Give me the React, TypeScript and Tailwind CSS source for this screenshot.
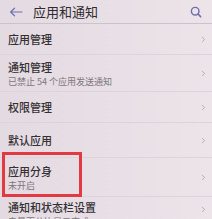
import { ChevronRight } from "lucide-react";

const rows = [
  { title: "应用管理", h: "h-[31px]" },
  { title: "通知管理", sub: "已禁止 54 个应用发送通知", h: "h-[37px]" },
  { title: "权限管理", h: "h-[31px]" },
  { title: "默认应用", h: "h-[35px]" },
  { title: "应用分身", sub: "未开启", h: "h-[39px]", marked: true },
  { title: "通知和状态栏设置", sub: "电量百分比显示方式", h: "h-[40px]" },
];

export default function App() {
  return (
    <div className="w-[212px] h-[219px] overflow-hidden bg-gradient-to-r from-[#e4dae1] to-[#ede4ea] text-[#353035] font-['Noto_Sans_CJK_SC','Noto_Sans',sans-serif]">
      <div className="h-[24px] flex items-center px-[9px] border-b border-[#cbc3ca]">
        <svg width="14" height="10" viewBox="0 0 14 10" className="text-[#7072b4]">
          <path d="M13 5H2M5.5 1.2L1.6 5l3.9 3.8" fill="none" stroke="currentColor" strokeWidth="1.2" strokeLinecap="round" strokeLinejoin="round" />
        </svg>
        <span className="ml-[10px] text-[13px] leading-none text-[#2f2b30]">应用和通知</span>
        <svg width="12" height="12" viewBox="0 0 12 12" className="ml-auto mr-[1px] text-[#6a6ea8]">
          <circle cx="5.2" cy="5.2" r="3.8" fill="none" stroke="currentColor" strokeWidth="1.4" />
          <path d="M8 8l2.6 2.6" stroke="currentColor" strokeWidth="1.5" strokeLinecap="round" />
        </svg>
      </div>
      {rows.map((r, i) => (
        <div
          key={i}
          className={`${r.h} relative flex items-center pl-[8px] pr-[4px] ${i < rows.length - 1 ? "border-b border-[#ddd3da]" : ""}`}
        >
          <div className={`flex-1 flex flex-col ${i === rows.length - 1 ? "self-start pt-[2px]" : ""}`}>
            <span className="text-[11px] leading-[16px] font-medium text-[#343034]">{r.title}</span>
            {r.sub && <span className="text-[9px] leading-[13px] text-[#7d777c]">{r.sub}</span>}
          </div>
          <ChevronRight size={9} strokeWidth={2} className={`text-[#a39da2] ${i === rows.length - 1 ? "self-start mt-[8px]" : ""}`} />
          {r.marked && (
            <div className="absolute left-[2px] top-[-6px] w-[80px] h-[45px] border-[3px] border-[#e23a40]" />
          )}
        </div>
      ))}
    </div>
  );
}
